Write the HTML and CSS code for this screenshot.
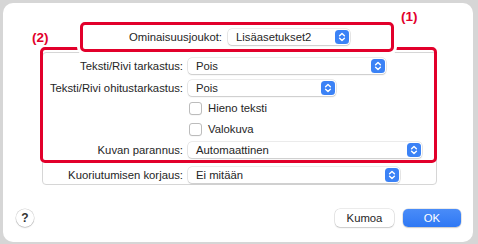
FILE: index.html
```html
<!DOCTYPE html>
<html>
<head>
<meta charset="utf-8">
<link rel="stylesheet" href="styles.css">
</head>
<body>
<div class="dialog">
  <div class="preset-row">
    <span class="label preset-label">Ominaisuusjoukot:</span>
    <div class="popup w-preset"><span>Lisäasetukset2</span><svg class="stepper" viewBox="0 0 14 14"><rect width="14" height="14" rx="3.5" fill="#3b82f6"/><path d="M4.6 5.7 7 3.4 9.4 5.7M4.6 8.3 7 10.6 9.4 8.3" fill="none" stroke="#fff" stroke-width="1.4" stroke-linecap="round" stroke-linejoin="round"/></svg></div>
  </div>

  <div class="panel">
    <div class="row">
      <span class="label">Teksti/Rivi tarkastus:</span>
      <div class="popup w1"><span>Pois</span><svg class="stepper" viewBox="0 0 14 14"><rect width="14" height="14" rx="3.5" fill="#3b82f6"/><path d="M4.6 5.7 7 3.4 9.4 5.7M4.6 8.3 7 10.6 9.4 8.3" fill="none" stroke="#fff" stroke-width="1.4" stroke-linecap="round" stroke-linejoin="round"/></svg></div>
    </div>
    <div class="row gap-6">
      <span class="label">Teksti/Rivi ohitustarkastus:</span>
      <div class="popup w2"><span>Pois</span><svg class="stepper" viewBox="0 0 14 14"><rect width="14" height="14" rx="3.5" fill="#3b82f6"/><path d="M4.6 5.7 7 3.4 9.4 5.7M4.6 8.3 7 10.6 9.4 8.3" fill="none" stroke="#fff" stroke-width="1.4" stroke-linecap="round" stroke-linejoin="round"/></svg></div>
    </div>
    <div class="row gap-4">
      <span class="label"></span>
      <span class="check"><span class="box"></span>Hieno teksti</span>
    </div>
    <div class="row gap-5">
      <span class="label"></span>
      <span class="check"><span class="box"></span>Valokuva</span>
    </div>
    <div class="row gap-5">
      <span class="label">Kuvan parannus:</span>
      <div class="popup w3"><span>Automaattinen</span><svg class="stepper" viewBox="0 0 14 14"><rect width="14" height="14" rx="3.5" fill="#3b82f6"/><path d="M4.6 5.7 7 3.4 9.4 5.7M4.6 8.3 7 10.6 9.4 8.3" fill="none" stroke="#fff" stroke-width="1.4" stroke-linecap="round" stroke-linejoin="round"/></svg></div>
    </div>
    <div class="row gap-9">
      <span class="label">Kuoriutumisen korjaus:</span>
      <div class="popup w4"><span>Ei mitään</span><svg class="stepper" viewBox="0 0 14 14"><rect width="14" height="14" rx="3.5" fill="#3b82f6"/><path d="M4.6 5.7 7 3.4 9.4 5.7M4.6 8.3 7 10.6 9.4 8.3" fill="none" stroke="#fff" stroke-width="1.4" stroke-linecap="round" stroke-linejoin="round"/></svg></div>
    </div>
  </div>

  <div class="buttons">
    <button class="help">?</button>
    <span class="spacer"></span>
    <button class="btn">Kumoa</button>
    <button class="btn primary">OK</button>
  </div>

  <div class="mark mark2"></div>
  <div class="mark mark1"></div>
  <span class="tag tag1">(1)</span>
  <span class="tag tag2">(2)</span>
</div>
</body>
</html>
```
FILE: styles.css
```css
html, body {
  margin: 0;
  height: 244px;
  overflow: hidden;
}
body {
  background: #d6d6d6;
  font-family: "Liberation Sans", Arial, sans-serif;
  font-size: 11.3px;
  color: #262626;
}
.dialog {
  position: relative;
  margin: 3px 5px 0 3px;
  height: 239px;
  background: #fff;
  border-radius: 10px;
  box-sizing: border-box;
  padding-top: 26px;
  display: flex;
  flex-direction: column;
}
.preset-row {
  position: relative;
  z-index: 3;
  display: flex;
  align-items: center;
  height: 16px;
  margin-left: 94px;
}
.label {
  flex: none;
  width: 140px;
  margin-right: 5px;
  text-align: right;
  white-space: nowrap;
}
.preset-label {
  width: 125px;
  margin-right: 6px;
}
.popup {
  display: flex;
  align-items: center;
  justify-content: space-between;
  box-sizing: border-box;
  height: 16px;
  padding: 0 1px 0 8px;
  background: #fff;
  border-radius: 4px;
  box-shadow: 0 0 0 0.5px rgba(0, 0, 0, 0.16), 0 1px 1.5px rgba(0, 0, 0, 0.14);
  white-space: nowrap;
}
.stepper {
  width: 14px;
  height: 14px;
  flex: none;
}
.w-preset { width: 122px; }
.w1 { width: 198px; }
.w2 { width: 148px; }
.w3 { width: 234px; }
.w4 { width: 212px; }

.panel {
  margin: 7px 36px 0 39px;
  border: 1px solid #d6d6d6;
  border-radius: 4px;
  background: #fff;
  padding: 5px 0 1px 0;
}
.row {
  display: flex;
  align-items: center;
  height: 16px;
}
.gap-4 { margin-top: 4px; }
.gap-5 { margin-top: 5px; }
.gap-6 { margin-top: 6px; }
.gap-9 { margin-top: 9px; }

.check {
  display: flex;
  align-items: center;
  margin-left: 1px;
}
.box {
  width: 11px;
  height: 11px;
  margin-right: 6px;
  border: 1px solid #bcbcbc;
  border-radius: 3px;
  background: #fff;
  box-shadow: 0 0.5px 0.5px rgba(0, 0, 0, 0.06);
}

.buttons {
  display: flex;
  align-items: center;
  margin-top: 24px;
  padding: 0 12px 0 13px;
}
.spacer { flex: 1; }
.help {
  width: 18px;
  height: 18px;
  padding: 0;
  border: none;
  border-radius: 50%;
  background: #fff;
  box-shadow: 0 0 0 0.5px rgba(0, 0, 0, 0.18), 0 1px 1.5px rgba(0, 0, 0, 0.14);
  font-family: "Liberation Sans", Arial, sans-serif;
  font-size: 12px;
  font-weight: bold;
  color: #333;
}
.btn {
  width: 59px;
  height: 18px;
  margin-left: 9px;
  padding: 0;
  border: none;
  border-radius: 5px;
  background: #fff;
  box-shadow: 0 0 0 0.5px rgba(0, 0, 0, 0.16), 0 1px 1.5px rgba(0, 0, 0, 0.14);
  font-family: "Liberation Sans", Arial, sans-serif;
  font-size: 11.3px;
  color: #262626;
}
.primary {
  width: 58px;
  background: linear-gradient(#4a8cf8, #2f78f4);
  color: #fff;
}

.mark {
  position: absolute;
  box-sizing: border-box;
  border: 3px solid #e2002b;
  border-radius: 5px;
}
.mark2 {
  z-index: 1;
  left: 37px;
  top: 44px;
  width: 397px;
  height: 116px;
}
.mark1 {
  z-index: 2;
  left: 77px;
  top: 19px;
  width: 314px;
  height: 30px;
  background: #fff;
  box-shadow: 0 0 0 3px #fff;
}
.tag {
  position: absolute;
  z-index: 4;
  color: #e2002b;
  font-weight: bold;
  font-size: 13.5px;
  line-height: 14px;
}
.tag1 { left: 398px; top: 7px; }
.tag2 { left: 29px; top: 28px; }
```
